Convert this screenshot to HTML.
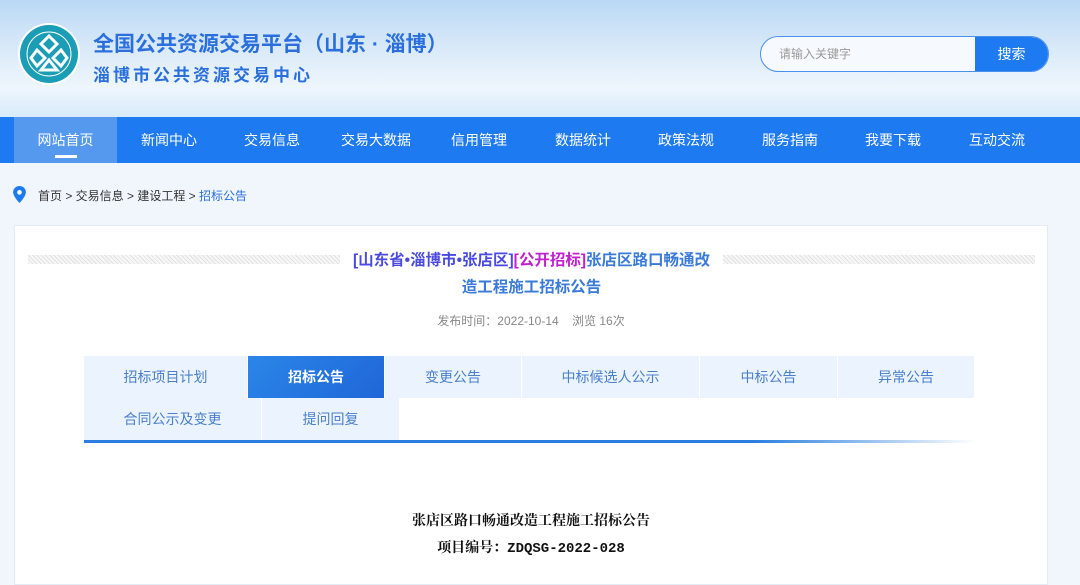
<!DOCTYPE html>
<html><head><meta charset="utf-8"><style>
*{margin:0;padding:0;box-sizing:border-box}
body{width:1080px;height:562px;overflow:hidden;background:#f1f6fd;font-family:"Liberation Sans","Noto Sans CJK SC",sans-serif;position:relative}
.hdr{position:absolute;left:0;top:0;width:1080px;height:117px;background:linear-gradient(180deg,#b9d8f5 0%,#dcebf9 45%,#eef6fd 75%,#d8ebfa 100%)}
.nav{position:absolute;left:0;top:117px;width:1080px;height:46px;background:#1e7af0}
.nav div{position:absolute;top:0;height:46px;line-height:46px;width:104px;text-align:center;color:#fff;font-size:14px}
.a{position:absolute}
.card{position:absolute;left:14px;top:225px;width:1034px;height:360px;background:#fff;border:1px solid #e3ebf5}
.tab{position:absolute;height:42px;line-height:42px;text-align:center;background:#eaf3fe;color:#4a7fc9;font-size:14px}
.hatch{position:absolute;top:255px;height:9px;background:repeating-linear-gradient(45deg,#e2e2e2 0 1px,#f7f7f7 1px 3px)}
</style></head><body>
<div class="hdr"></div>
<svg class="a" style="left:17px;top:22px" width="64" height="64" viewBox="0 0 64 64"><circle cx="32" cy="32" r="31" fill="#fff"/><circle cx="32" cy="32" r="29" fill="#1a9db5"/><circle cx="32" cy="32" r="22" fill="none" stroke="#fff" stroke-width="1"/><path d="M32 14 L40 22 L32 30 L24 22Z M20 28 L28 36 L20 44 L14 36Z M44 28 L50 36 L44 44 L36 36Z M32 38 L40 48 L24 48Z" fill="none" stroke="#fff" stroke-width="3"/></svg>
<div class="a" style="left:93px;top:28px;font-size:21px;font-weight:bold;color:#2a6fdc">全国公共资源交易平台（山东 · 淄博）</div>
<div class="a" style="left:93px;top:61px;font-size:17px;font-weight:bold;color:#2a6fdc;letter-spacing:3px">淄博市公共资源交易中心</div>
<div class="a" style="left:760px;top:36px;width:289px;height:36px;border:1px solid #4a90ef;border-radius:18px;background:#f6faff;overflow:hidden">
<div class="a" style="left:18px;top:0;line-height:34px;font-size:12px;color:#999">请输入关键字</div>
<div class="a" style="right:0;top:0;width:73px;height:34px;background:#1e7af0;color:#fff;line-height:34px;text-align:center;font-size:14px">搜索</div></div>
<div class="nav">
<div style="left:14px;width:103px;background:#5599ee">网站首页<span class="a" style="left:41px;top:38px;width:22px;height:3px;background:#fff"></span></div>
<div style="left:117px">新闻中心</div><div style="left:220px">交易信息</div><div style="left:324px">交易大数据</div><div style="left:427px">信用管理</div><div style="left:531px">数据统计</div><div style="left:634px">政策法规</div><div style="left:738px">服务指南</div><div style="left:841px">我要下载</div><div style="left:945px">互动交流</div>
</div>
<svg class="a" style="left:13px;top:186px" width="13" height="17" viewBox="0 0 12 16"><path d="M6 0C2.7 0 0 2.6 0 5.8 0 10 6 16 6 16s6-6 6-10.2C12 2.6 9.3 0 6 0z" fill="#1e7af0"/><circle cx="6" cy="6" r="2.2" fill="#fff"/></svg>
<div class="a" style="left:38px;top:187px;font-size:12px;color:#333">首页 &gt; 交易信息 &gt; 建设工程 &gt; <span style="color:#2a6fdc">招标公告</span></div>
<div class="card"></div>
<div class="hatch" style="left:28px;width:312px"></div>
<div class="hatch" style="left:723px;width:312px"></div>
<div class="a" style="left:340px;width:383px;top:249px;text-align:center;font-size:15.5px;font-weight:bold;color:#3a7ad8;line-height:23px"><span style="color:#4a4ae0">[山东省•淄博市•张店区]</span><span style="color:#c020d0">[公开招标]</span>张店区路口畅通改</div>
<div class="a" style="left:340px;width:383px;top:276px;text-align:center;font-size:15.5px;font-weight:bold;color:#3a7ad8;line-height:23px">造工程施工招标公告</div>
<div class="a" style="left:0;width:1062px;top:312px;text-align:center;font-size:12px;color:#888">发布时间：2022-10-14 &nbsp;&nbsp; 浏览 16次</div>
<div class="tab" style="left:84px;top:356px;width:163px">招标项目计划</div>
<div class="tab" style="left:248px;top:356px;width:136px;background:linear-gradient(135deg,#2b86e8,#1f66d8);color:#fff;font-weight:bold">招标公告</div>
<div class="tab" style="left:385px;top:356px;width:136px">变更公告</div>
<div class="tab" style="left:522px;top:356px;width:177px">中标候选人公示</div>
<div class="tab" style="left:700px;top:356px;width:137px">中标公告</div>
<div class="tab" style="left:838px;top:356px;width:136px">异常公告</div>
<div class="tab" style="left:84px;top:398px;width:177px">合同公示及变更</div>
<div class="tab" style="left:262px;top:398px;width:137px">提问回复</div>
<div class="a" style="left:84px;top:440px;width:892px;height:3px;background:linear-gradient(90deg,#2a7ee0 0%,#2a7ee0 75%,rgba(42,126,224,0))"></div>
<div class="a" style="left:0;width:1062px;top:510px;text-align:center;font-family:'Liberation Serif','Noto Serif CJK SC',serif;font-size:14px;font-weight:bold;color:#111">张店区路口畅通改造工程施工招标公告</div>
<div class="a" style="left:0;width:1062px;top:537px;text-align:center;font-family:'Liberation Mono','Noto Serif CJK SC',monospace;font-size:14px;font-weight:bold;color:#111">项目编号：ZDQSG-2022-028</div>
</body></html>
